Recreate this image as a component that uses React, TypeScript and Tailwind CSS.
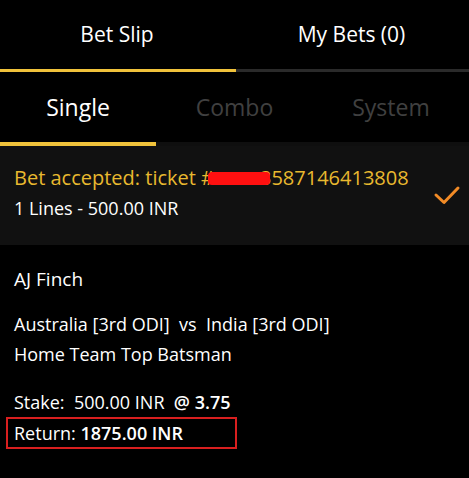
import React from "react";

export default function App() {
  return (
    <div
      className="w-[469px] h-[478px] bg-black text-white overflow-hidden"
      style={{ fontFamily: '"Open Sans", "Noto Sans", sans-serif' }}
    >
      {/* Top tabs */}
      <div className="flex h-[69px] items-center text-[21px]">
        <div className="w-[234px] text-center pt-[1px]">Bet Slip</div>
        <div className="flex-1 text-center pt-[1px]">My Bets (0)</div>
      </div>
      <div className="flex h-[3px]">
        <div className="w-[236px] bg-[#f0c23b]" />
        <div className="flex-1 bg-[#2a2a2a]" />
      </div>
      {/* Sub tabs */}
      <div className="flex h-[70px] items-center text-[23px]">
        <div className="w-[156px] text-center pt-[1px]">Single</div>
        <div className="w-[157px] text-center pt-[1px] text-[#404040]">Combo</div>
        <div className="flex-1 text-center pt-[1px] text-[#404040]">System</div>
      </div>
      <div className="flex h-[4px]">
        <div className="w-[156px] bg-[#f0c23b]" />
        <div className="flex-1 bg-[#0f0f0f]" />
      </div>
      {/* Accepted panel */}
      <div className="h-[99px] bg-[#111111] flex items-center pl-[14px] pr-[8px]">
        <div className="flex-1 pb-[6px]">
          <div className="text-[20px] leading-[30px] text-[#e9b92f] flex items-center whitespace-nowrap">
            <span>Bet accepted: ticket #</span>
            <span className="relative z-10 inline-block w-[62px] h-[13px] bg-[#ff1010] rounded-[4px] -ml-[6px] mr-[-10px] mt-[1px]" />
            <span>3587146413808</span>
          </div>
          <div className="text-[18px] leading-[30px] text-white">1 Lines - 500.00 INR</div>
        </div>
        <svg width="28" height="22" viewBox="0 0 28 22" className="-mt-[2px]">
          <path
            d="M3 11 L11 18.5 L25 4"
            fill="none"
            stroke="#f28b26"
            strokeWidth="3"
            strokeLinecap="round"
            strokeLinejoin="round"
          />
        </svg>
      </div>
      {/* Details */}
      <div className="pl-[14px] pt-[20px]">
        <div className="text-[19px] leading-[28px]">AJ Finch</div>
        <div className="mt-[16px] text-[18px] leading-[30px] whitespace-pre">
          Australia [3rd ODI]  vs  India [3rd ODI]
        </div>
        <div className="text-[18px] leading-[30px]">Home Team Top Batsman</div>
        <div className="mt-[18px] text-[18px] leading-[30px] whitespace-pre">
          Stake:  500.00 INR  <span className="font-semibold">@ 3.75</span>
        </div>
      </div>
      <div className="ml-[6px] mt-[0px] w-[231px] h-[32px] border-2 border-[#d91f1f] flex items-center pl-[6px] text-[18px] whitespace-pre">
        Return: <span className="font-semibold">1875.00 INR</span>
      </div>
    </div>
  );
}
